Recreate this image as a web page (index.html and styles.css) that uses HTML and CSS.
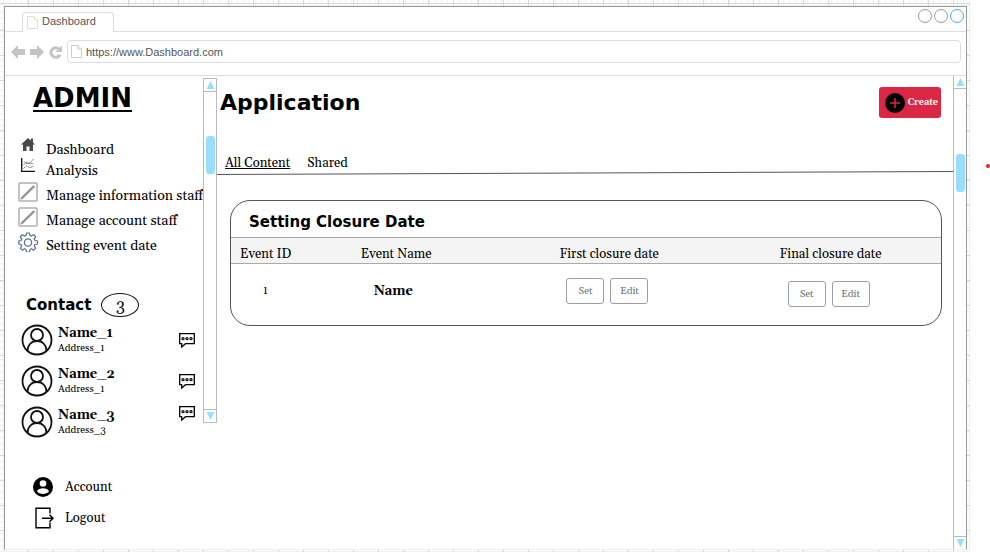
FILE: index.html
```html
<!DOCTYPE html>
<html lang="en">
<head>
<meta charset="utf-8">
<title>Dashboard</title>
<link rel="stylesheet" href="styles.css">
</head>
<body>
<svg class="defs" width="0" height="0" aria-hidden="true">
  <symbol id="page" viewBox="0 0 11 13"><path d="M.5.5h6.500l3.500 3.500v8.500h-10zM7 .5v3.500h3.500" fill="#fff" stroke="currentColor"/></symbol>
  <symbol id="pencil" viewBox="0 0 20 20"><rect x="1" y="1" width="18" height="18" rx="1" fill="#fff" stroke="#b0b0b0" stroke-width="1.500"/><path d="M2.800 17.200l.7-2L15.500 3.500l1.300 1.300L4.800 16.500z" fill="#909090" stroke="#909090" stroke-width=".6"/></symbol>
  <symbol id="avatar" viewBox="0 0 32 32"><g fill="none" stroke="#111" stroke-width="1.800"><circle cx="16" cy="16" r="14.500"/><circle cx="16" cy="11" r="6"/><path d="M6.500 27c0-6 4-10 9.500-10s9.500 4 9.500 10"/></g></symbol>
  <symbol id="chat" viewBox="0 0 16 16"><path d="M.7 1.700h14.600v10H6.500L2.700 15v-3.300h-2z" fill="#fff" stroke="#000" stroke-width="1.300"/><g fill="none" stroke="#000" stroke-width="1.100"><circle cx="4" cy="6.700" r="1.100"/><circle cx="8" cy="6.700" r="1.100"/><circle cx="12" cy="6.700" r="1.100"/></g></symbol>
  <symbol id="up" viewBox="0 0 9 8"><path d="M4.500 0L8.500 8h-8z" fill="#99ddff"/></symbol>
  <symbol id="down" viewBox="0 0 9 8"><path d="M4.500 8L8.500 0h-8z" fill="#99ddff"/></symbol>
</svg>
<div class="window">
  <div class="tabbar">
    <div class="tab"><svg class="page-icon faint"><use href="#page"/></svg>Dashboard</div>
    <div class="dots"><i></i><i></i><i class="active"></i></div>
  </div>
  <div class="toolbar">
    <button aria-label="Back"><svg width="15" height="14" viewBox="0 0 15 14"><path d="M0 7l7-7v4h7v6H7v4z" fill="#c4c4c4"/></svg></button>
    <button aria-label="Forward"><svg width="15" height="14" viewBox="0 0 15 14"><path d="M14 7L7 0v4H0v6h7v4z" fill="#c4c4c4"/></svg></button>
    <button aria-label="Reload"><svg width="14" height="14" viewBox="0 0 14 14"><path d="M11 9.800a4.800 4.800 0 1 1-1-5.800" fill="none" stroke="#c4c4c4" stroke-width="3"/><path d="M13 .5v6.500H6.500z" fill="#c4c4c4"/></svg></button>
    <label class="address"><svg class="page-icon"><use href="#page"/></svg><input type="text" aria-label="Address" value="https://www.Dashboard.com"></label>
  </div>
  <div class="content">
    <aside class="sidebar">
      <h1>ADMIN</h1>
      <nav class="menu">
        <a href="#"><svg class="small" viewBox="0 0 14 14"><path d="M7 1L0 7.500h2V14h3.500V9.500h3V14H12V7.500h2L12 5.500V1.500h-2v2z" fill="#484848"/></svg><span>Dashboard</span></a>
        <a href="#"><svg class="small" viewBox="0 0 14 14"><path d="M.7 0v13.300H14" fill="none" stroke="#111" stroke-width="1.300"/><path d="M2.500 10.500l3-2.500 3 1.500 4-1M2.500 7l3-3 2.500 2 4.500-5M3 3.500l2 2 4-.5 3.500 1" fill="none" stroke="#555" stroke-width=".8" stroke-dasharray="2 .6"/></svg><span>Analysis</span></a>
        <a href="#" class="tall"><svg><use href="#pencil"/></svg><span>Manage information staff</span></a>
        <a href="#" class="tall"><svg><use href="#pencil"/></svg><span>Manage account staff</span></a>
        <a href="#" class="tall"><svg viewBox="0 0 20 20"><g fill="none" stroke="#4f6f88" stroke-width="1.200" stroke-linejoin="round"><path d="M8.500 1h3l.5 2.500 1.500.6 2.200-1.400 2 2-1.400 2.200.7 1.600 2.500.5v3l-2.500.5-.7 1.500 1.400 2.200-2 2-2.200-1.400-1.500.7-.5 2.500h-3L8 17.500l-1.500-.7-2.200 1.400-2-2L3.700 14 3 12.500.8 12V9L3 8.500l.7-1.600-1.400-2.200 2-2 2.200 1.400L8 3.500z"/><circle cx="10" cy="10.500" r="3.700"/></g></svg><span>Setting event date</span></a>
      </nav>
      <div class="contact-head"><h2>Contact</h2><span class="count">3</span></div>
      <ul class="contacts">
        <li><svg class="avatar"><use href="#avatar"/></svg><div class="who"><b>Name_1</b><small>Address_1</small></div><button aria-label="Chat with Name_1"><svg width="16" height="16"><use href="#chat"/></svg></button></li>
        <li><svg class="avatar"><use href="#avatar"/></svg><div class="who"><b>Name_2</b><small>Address_1</small></div><button aria-label="Chat with Name_2"><svg width="16" height="16"><use href="#chat"/></svg></button></li>
        <li><svg class="avatar"><use href="#avatar"/></svg><div class="who"><b>Name_3</b><small>Address_3</small></div><button aria-label="Chat with Name_3"><svg width="16" height="16"><use href="#chat"/></svg></button></li>
      </ul>
      <nav class="session">
        <a href="#"><svg viewBox="0 0 22 22"><circle cx="10" cy="11" r="10" fill="#000"/><circle cx="10" cy="7.500" r="3.300" fill="#fff"/><path d="M4 15.200c1-4 11-4 12 0-2.500 3.700-9.500 3.700-12 0z" fill="#fff"/></svg><span>Account</span></a>
        <a href="#"><svg viewBox="0 0 22 22"><path d="M17 6.500V1.200H3v19.600h14v-5.300" fill="none" stroke="#000" stroke-width="1.400"/><path d="M9 11.300h11M16.500 7.800l3.500 3.500-3.500 3.500" fill="none" stroke="#000" stroke-width="1.400"/></svg><span>Logout</span></a>
      </nav>
    </aside>
    <div class="scroll inner"><div class="cap"><svg><use href="#up"/></svg></div><div class="track"><div class="thumb"></div></div><div class="cap end"><svg><use href="#down"/></svg></div></div>
    <main>
      <header>
        <h2>Application</h2>
        <button class="create"><svg width="20" height="20" viewBox="0 0 20 20"><circle cx="10" cy="10" r="10" fill="#000"/><path d="M10 5v10M5 10h10" stroke="#dc2744" stroke-width="1.500"/></svg>Create</button>
      </header>
      <nav class="views"><a href="#" class="current">All Content</a><a href="#">Shared</a></nav>
      <svg class="rule" viewBox="0 0 100 4" preserveAspectRatio="none"><path d="M0 3.500L100 .5" stroke="#555" vector-effect="non-scaling-stroke"/></svg>
      <section class="card">
        <h3>Setting Closure Date</h3>
        <table>
          <thead><tr><th class="id">Event ID</th><th class="name">Event Name</th><th class="first">First closure date</th><th>Final closure date</th></tr></thead>
          <tbody><tr><td class="num">1</td><td class="event">Name</td><td><div class="actions"><button>Set</button><button>Edit</button></div></td><td><div class="actions final"><button>Set</button><button>Edit</button></div></td></tr></tbody>
        </table>
      </section>
    </main>
    <div class="scroll outer"><div class="cap"><svg><use href="#up"/></svg></div><div class="track"><div class="thumb"></div></div><div class="cap end"><svg><use href="#down"/></svg></div></div>
  </div>
</div>
<span class="marker"></span>
</body>
</html>
```
FILE: styles.css
```css
* { box-sizing: border-box; }
body {
  margin: 0;
  min-height: 100vh;
  display: flex;
  padding: 6px 23px 2px 4px;
  background:
    linear-gradient(90deg, transparent calc(100% - 20px), #fff 0),
    repeating-linear-gradient(90deg, transparent 0 24px, #d8d8d8 24px 25px) 4px 0,
    repeating-linear-gradient(transparent 0 24px, #d8d8d8 24px 25px) 0 6px,
    repeating-linear-gradient(90deg, transparent 0 5px, #f1f1f1 5px 6px) 4px 0,
    repeating-linear-gradient(transparent 0 5px, #f1f1f1 5px 6px) 0 6px,
    #fff;
  font: 14px/20px Gelasio, Georgia, "Liberation Serif", serif;
  color: #000;
}
h1, h2, h3, ul { margin: 0; padding: 0; font-family: Verdana, "DejaVu Sans", sans-serif; }
a { color: inherit; text-decoration: none; }
button { font: inherit; color: inherit; border: 0; padding: 0; background: none; }
svg { display: block; flex: none; }
.defs { position: absolute; }
.window {
  flex: 1;
  display: flex;
  flex-direction: column;
  background: #fff;
  border: 1px solid #999;
  border-bottom-color: #eee;
}
.tabbar {
  display: flex;
  justify-content: space-between;
  height: 25px;
  border-bottom: 1px solid #ddd;
  font: 11px/16px "Liberation Sans", Arial, sans-serif;
  color: #555;
}
.tab {
  display: flex;
  gap: 4px;
  width: 92px;
  height: 20px;
  margin: 5px 0 0 17px;
  padding-left: 4px;
  background: #fff;
  border: 1px solid #ddd;
  border-bottom: 0;
  border-radius: 4px 4px 0 0;
}
.page-icon { width: 11px; height: 13px; color: #ccc; }
.tab .page-icon { margin-top: 3px; color: #ddd; }
.dots { display: flex; gap: 2px; padding: 2px 2px 0 0; }
.dots i { width: 14px; height: 14px; border: 1px solid #999; border-radius: 50%; }
.dots .active { border-color: #4fa8ee; }
.toolbar {
  display: flex;
  align-items: center;
  gap: 4px;
  height: 44px;
  padding: 0 5px 4px 6px;
  border-bottom: 1px solid #ddd;
}
.address {
  flex: 1;
  display: flex;
  align-items: center;
  gap: 4px;
  height: 23px;
  padding-left: 3px;
  border: 1px solid #ddd;
  border-radius: 4px;
}
.address input {
  flex: 1;
  border: 0;
  padding: 0;
  outline: 0;
  font: 11px/18px "Liberation Sans", Arial, sans-serif;
  color: #555;
}
.content { flex: 1; display: flex; }
.sidebar { width: 198px; flex: none; }
h1 { padding: 6px 0 0 28px; font-size: 26px; line-height: 32px; text-decoration: underline; text-decoration-thickness: 2px; text-underline-offset: 3px; }
.menu { padding: 24px 0 0 13px; }
.menu a { display: flex; height: 21px; gap: 8px; white-space: nowrap; }
.menu svg { width: 20px; height: 20px; }
.menu svg.small { height: 14px; }
.menu span { padding-top: 4px; }
.menu .tall { height: 25px; }
.menu .small + span { padding-top: 2px; }
.menu .small { margin-top: -1px; }
.menu a:not(.tall) + .tall { margin-top: 2px; }
.contact-head { display: flex; align-items: center; gap: 10px; padding: 36px 0 0 21px; }
.contact-head h2 { font-size: 15px; line-height: 24px; }
.count { width: 38px; height: 24px; border: 1px solid #111; border-radius: 50%; text-align: center; line-height: 24px; font-size: 16px; }
.contacts { list-style: none; padding: 2px 8px 0 16px; font-family: inherit; }
.contacts li { display: flex; align-items: center; height: 41px; padding: 4px 0; }
.contacts li:last-child button { align-self: flex-start; }
.contacts .avatar { width: 32px; height: 32px; }
.who { flex: 1; padding-left: 5px; }
.who b, .who small { display: block; }
.who b { font-size: 13px; line-height: 17px; }
.who small { font-size: 10px; line-height: 13px; }
.session { display: flex; flex-direction: column; gap: 9px; padding: 34px 0 0 28px; }
.session a { display: flex; gap: 10px; font-size: 13px; line-height: 22px; }
.session svg { width: 22px; height: 22px; }
.scroll {
  width: 14px;
  flex: none;
  display: flex;
  flex-direction: column;
  border: 1px solid #bbb;
  border-width: 0 0 0 1px;
}
.scroll.outer { width: 13px; }
.scroll.inner { height: 345px; margin-top: 2px; border-width: 1px; }
.cap { display: grid; place-items: center; height: 13px; border-bottom: 1px solid #bbb; }
.cap.end { border-bottom: 0; border-top: 1px solid #bbb; }
.cap svg { width: 9px; height: 8px; }
.track { flex: 1; }
.thumb { width: 9px; height: 38px; margin: 65px auto 0; border-radius: 3px; background: #99ddff; }
.inner .thumb { margin-top: 44px; }
main { flex: 1; min-width: 0; }
header { display: flex; justify-content: space-between; padding: 11px 12px 0 3px; }
header h2 { font-size: 22px; line-height: 32px; }
.create { display: flex; align-items: center; justify-content: flex-end; gap: 3px; width: 62px; height: 31px; padding-right: 3px; border-radius: 3px; background: #dc2744; color: #fff; font-size: 9px; font-weight: bold; }
.views { display: flex; gap: 17px; padding: 36px 0 0 8px; font-size: 13px; line-height: 16px; }
.current { text-decoration: underline; }
.rule { width: 100%; height: 4px; }
.card { margin: 25px 11px 0 13px; height: 126px; border: 1px solid #555; border-radius: 20px; overflow: hidden; }
h3 { padding: 6px 0 0 18px; font-size: 15px; line-height: 30px; }
table { width: 100%; border-collapse: collapse; table-layout: fixed; }
th { height: 26px; padding: 7px 0 0 9px; font-size: 13px; font-weight: normal; text-align: left; line-height: 18px; background: #f4f4f4; border: 1px solid #aaa; border-width: 1px 0; }
.id { width: 17%; }
.name { width: 28%; }
.first { width: 31%; }
td { height: 55px; padding: 0; }
.num { padding-left: 32px; font-size: 11px; }
.event { padding-left: 22px; font-weight: bold; font-size: 13px; }
.actions { display: flex; gap: 6px; padding-left: 16px; }
.final { padding: 6px 0 0 17px; }
.actions button { width: 38px; height: 26px; border: 1px solid #999fa5; border-radius: 3px; font-size: 10px; color: #6c757d; }
.marker { position: absolute; right: 0; top: 164px; width: 4px; height: 4px; border-radius: 50%; background: #ee1c25; }
```
